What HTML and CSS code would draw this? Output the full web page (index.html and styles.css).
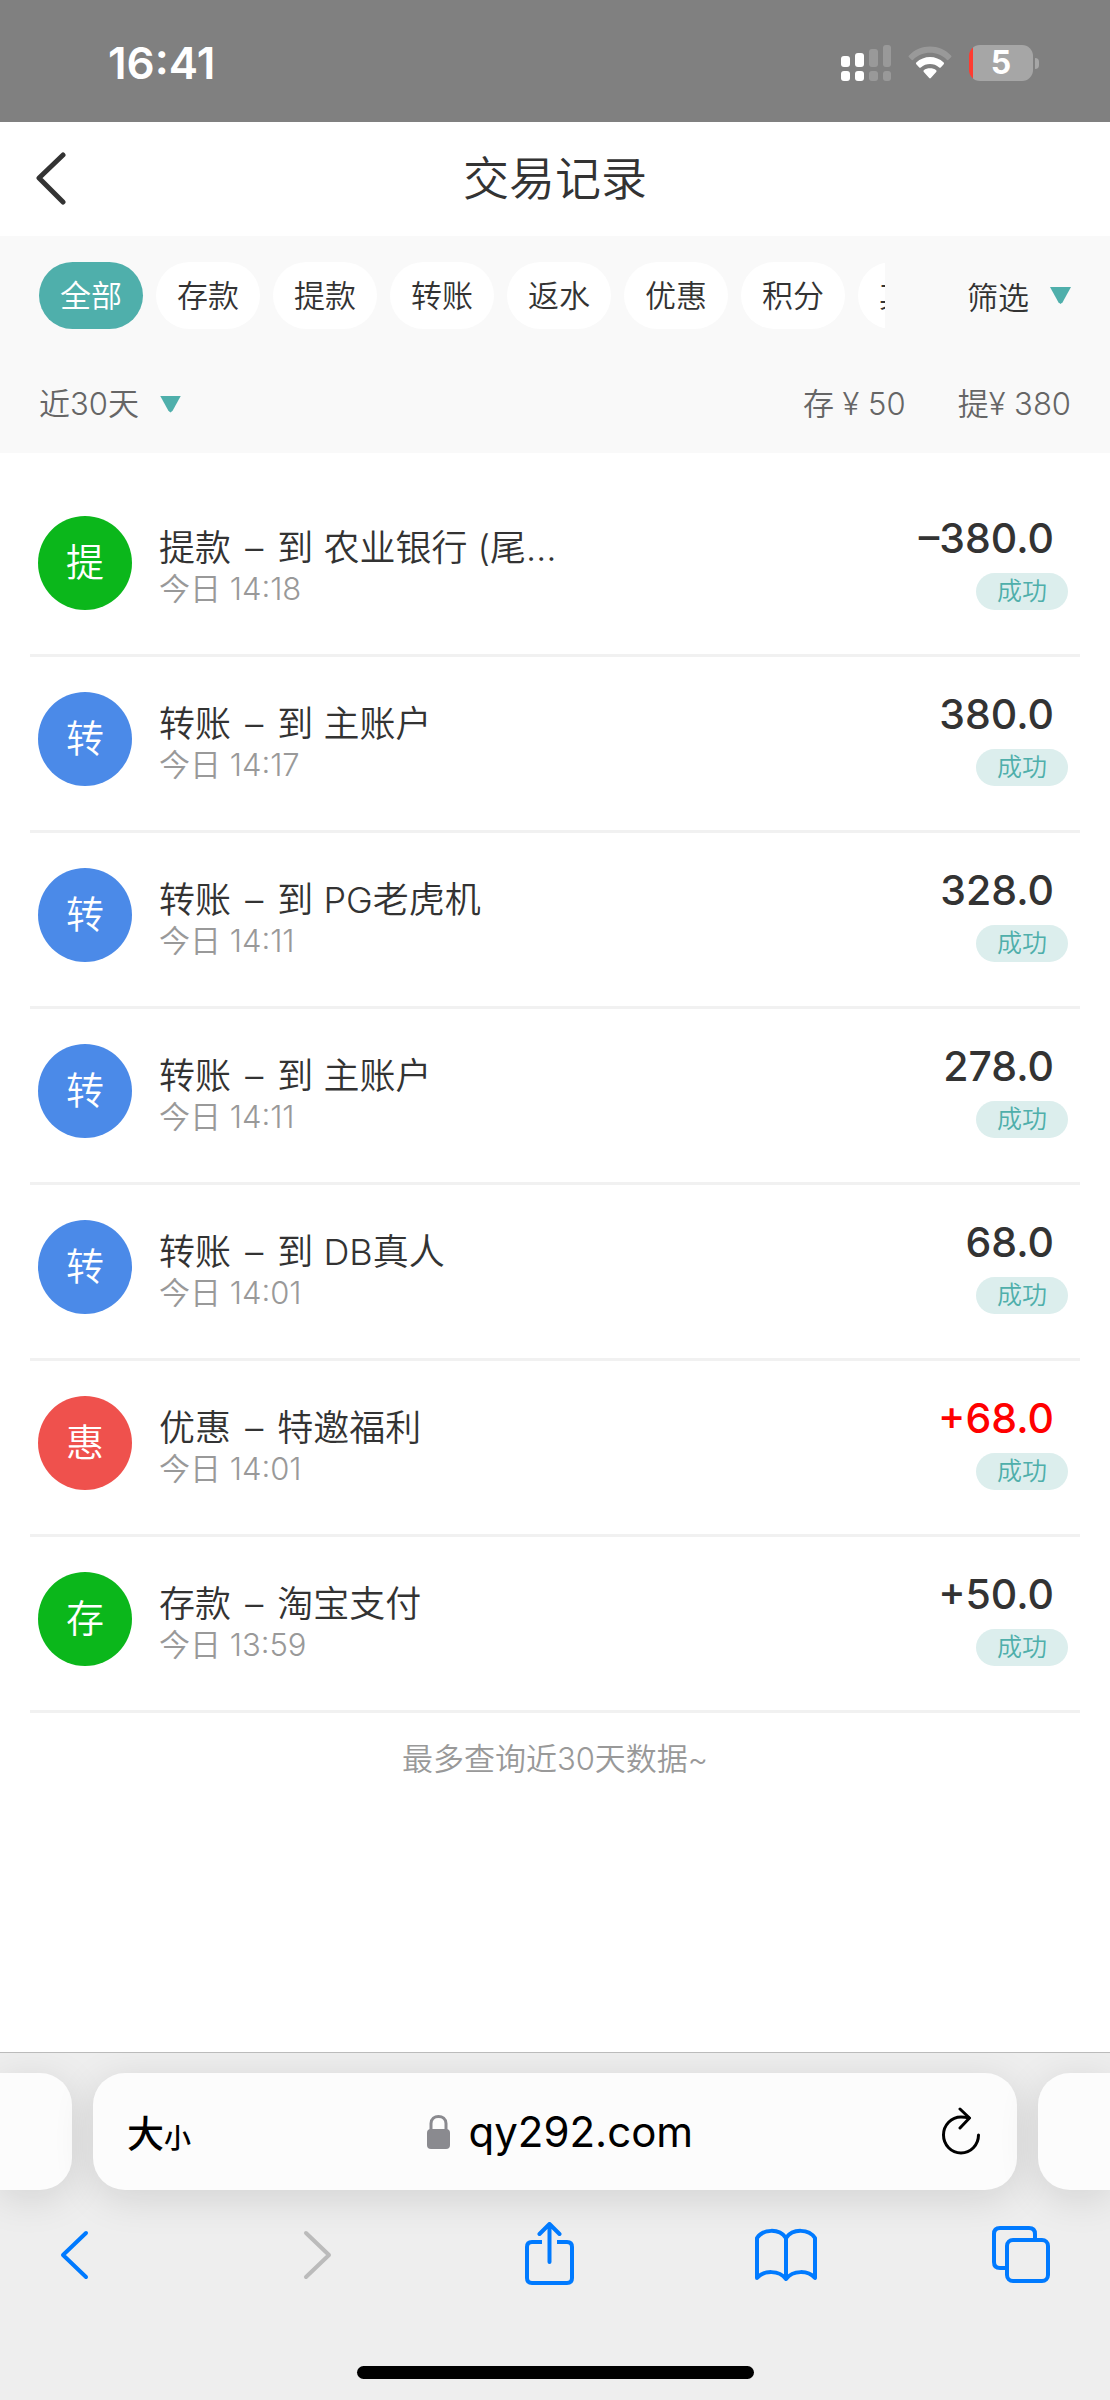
FILE: index.html
```html
<!DOCTYPE html>
<html lang="zh-CN">
<head>
    <meta charset="UTF-8">
    <meta name="viewport" content="width=device-width, initial-scale=1.0">
    <title>交易记录</title>
    <link rel="stylesheet" href="styles.css">
</head>
<body>
    <!-- Status bar -->
    <div class="status-bar">
        <span class="clock">16:41</span>
        <div class="status-icons">
            <svg class="signal" width="50" height="36" viewBox="0 0 50 36" fill="#fff" aria-hidden="true">
                <rect x="0" y="11" width="9" height="11" rx="3"/>
                <rect x="14" y="8" width="9" height="14" rx="3"/>
                <rect x="28" y="4" width="9" height="18" rx="3" opacity="0.2"/>
                <rect x="42" y="0" width="8" height="22" rx="3" opacity="0.2"/>
                <rect x="0" y="26" width="9" height="10" rx="3"/>
                <rect x="14" y="26" width="9" height="10" rx="3"/>
                <rect x="28" y="26" width="9" height="10" rx="3" opacity="0.2"/>
                <rect x="42" y="26" width="8" height="10" rx="3" opacity="0.2"/>
            </svg>
            <svg class="wifi" width="44" height="36" viewBox="0 0 44 36" fill="#fff" aria-hidden="true">
                <path opacity="0.2" d="M1 10.500C12 -1.500 32 -1.500 43 10.500Q44 11.300 43 12.200L40.200 15Q39.500 15.500 38.800 14.800C30 5.500 14 5.500 5.200 14.800Q4.500 15.500 3.800 15L1 12.200Q0 11.300 1 10.500Z"/>
                <path d="M8.300 17.600C16 10.200 28 10.200 35.700 17.600Q36.500 18.400 35.700 19.200L32.700 22.400Q32 23 31.200 22.400C26 17.900 18 17.900 12.800 22.400Q12 23 11.300 22.400L8.300 19.200Q7.500 18.400 8.300 17.600Z"/>
                <path d="M15.800 25.300C19 22.700 25 22.700 28.200 25.300Q29 26.100 28.200 26.900L22.800 33Q22 33.800 21.200 33L15.800 26.900Q15 26.100 15.800 25.300Z"/>
            </svg>
            <div class="battery"><span class="battery-level">5</span></div>
        </div>
    </div>

    <!-- Page header -->
    <header class="header">
        <a class="back" href="#" aria-label="返回">
            <svg width="32" height="54" viewBox="0 0 32 54" fill="none" stroke="#333" stroke-width="5" stroke-linecap="round" stroke-linejoin="round">
                <path d="M28 4L4 27L28 51"/>
            </svg>
        </a>
        <h1 class="title">交易记录</h1>
    </header>

    <!-- Filters -->
    <section class="filters">
        <div class="filter-row">
            <div class="tabs">
                <button type="button" class="tab active">全部</button>
                <button type="button" class="tab">存款</button>
                <button type="button" class="tab">提款</button>
                <button type="button" class="tab">转账</button>
                <button type="button" class="tab">返水</button>
                <button type="button" class="tab">优惠</button>
                <button type="button" class="tab">积分</button>
                <button type="button" class="tab">其他</button>
            </div>
            <button type="button" class="filter-btn">筛选<span class="arrow"></span></button>
        </div>
        <div class="summary-row">
            <label class="range">
                <select class="range-select" aria-label="时间范围">
                    <option>近30天</option>
                </select>
                <span class="arrow"></span>
            </label>
            <div class="totals">
                <span>存 ¥ 50</span>
                <span>提¥ 380</span>
            </div>
        </div>
    </section>

    <!-- Transaction list -->
    <main class="content">
        <ul class="records">
            <li class="record">
                <span class="badge green">提</span>
                <div class="info">
                    <p class="name">提款 <span class="dash">–</span> 到 农业银行 (尾…</p>
                    <p class="time">今日 14:18</p>
                </div>
                <div class="result">
                    <p class="amount">–380.0</p>
                    <span class="state">成功</span>
                </div>
            </li>
            <li class="record">
                <span class="badge blue">转</span>
                <div class="info">
                    <p class="name">转账 <span class="dash">–</span> 到 主账户</p>
                    <p class="time">今日 14:17</p>
                </div>
                <div class="result">
                    <p class="amount">380.0</p>
                    <span class="state">成功</span>
                </div>
            </li>
            <li class="record">
                <span class="badge blue">转</span>
                <div class="info">
                    <p class="name">转账 <span class="dash">–</span> 到 PG老虎机</p>
                    <p class="time">今日 14:11</p>
                </div>
                <div class="result">
                    <p class="amount">328.0</p>
                    <span class="state">成功</span>
                </div>
            </li>
            <li class="record">
                <span class="badge blue">转</span>
                <div class="info">
                    <p class="name">转账 <span class="dash">–</span> 到 主账户</p>
                    <p class="time">今日 14:11</p>
                </div>
                <div class="result">
                    <p class="amount">278.0</p>
                    <span class="state">成功</span>
                </div>
            </li>
            <li class="record">
                <span class="badge blue">转</span>
                <div class="info">
                    <p class="name">转账 <span class="dash">–</span> 到 DB真人</p>
                    <p class="time">今日 14:01</p>
                </div>
                <div class="result">
                    <p class="amount">68.0</p>
                    <span class="state">成功</span>
                </div>
            </li>
            <li class="record">
                <span class="badge red">惠</span>
                <div class="info">
                    <p class="name">优惠 <span class="dash">–</span> 特邀福利</p>
                    <p class="time">今日 14:01</p>
                </div>
                <div class="result">
                    <p class="amount bonus">+68.0</p>
                    <span class="state">成功</span>
                </div>
            </li>
            <li class="record">
                <span class="badge green">存</span>
                <div class="info">
                    <p class="name">存款 <span class="dash">–</span> 淘宝支付</p>
                    <p class="time">今日 13:59</p>
                </div>
                <div class="result">
                    <p class="amount">+50.0</p>
                    <span class="state">成功</span>
                </div>
            </li>
        </ul>
        <p class="note">最多查询近30天数据~</p>
    </main>

    <!-- Browser bar -->
    <footer class="browser">
        <div class="address-row">
            <div class="card card-left"></div>
            <div class="card address">
                <button type="button" class="text-size" aria-label="大小"><span class="big">大</span><span class="small">小</span></button>
                <div class="site">
                    <svg width="25" height="36" viewBox="0 0 25 36" aria-hidden="true">
                        <path d="M5 17V9.500C5 0 20 0 20 9.500V17" fill="none" stroke="#8a8a8f" stroke-width="3"/>
                        <rect x="1" y="15" width="23" height="20" rx="4" fill="#8a8a8f"/>
                    </svg>
                    <input class="url" type="text" value="qy292.com" aria-label="网址">
                </div>
                <button type="button" class="reload" aria-label="刷新">
                    <svg width="40" height="50" viewBox="0 0 40 50" fill="none" stroke="#000" stroke-width="3" stroke-linecap="round" stroke-linejoin="round">
                        <path d="M37.500 28A17.500 18 0 1 1 20 10C23 10 25.500 10.300 28 11"/>
                        <path d="M19 2L28.500 11L19 21"/>
                    </svg>
                </button>
            </div>
            <div class="card card-right"></div>
        </div>
        <nav class="toolbar">
            <button type="button" aria-label="后退">
                <svg width="64" height="66" viewBox="0 0 64 66" stroke-linejoin="round">
                    <path d="M43 11L20 33L43 55"/>
                </svg>
            </button>
            <button type="button" class="disabled" aria-label="前进" disabled>
                <svg width="64" height="66" viewBox="0 0 64 66" stroke-linejoin="round">
                    <path d="M26 11L49 33L26 55"/>
                </svg>
            </button>
            <button type="button" aria-label="分享">
                <svg width="64" height="66" viewBox="0 0 64 66">
                    <path stroke-linecap="butt" d="M25 20H15Q10 20 10 25V56Q10 61 15 61H50Q55 61 55 56V25Q55 20 50 20H40"/>
                    <path stroke-linejoin="round" d="M32.500 40V3M22.500 12L32.500 2L42.500 12"/>
                </svg>
            </button>
            <button type="button" aria-label="书签">
                <svg width="64" height="66" viewBox="0 0 64 66" stroke-linejoin="round">
                    <path d="M33 16C26 6 10 7 4 16V56C11 48 26 48 33 57C40 48 55 48 62 56V16C56 7 40 6 33 16ZM33 16V57"/>
                </svg>
            </button>
            <button type="button" aria-label="标签页">
                <svg width="64" height="66" viewBox="0 0 64 66">
                    <rect x="17" y="18" width="41" height="41" rx="6"/>
                    <path stroke-linecap="butt" d="M45 18V12Q45 6 39 6H10Q4 6 4 12V40Q4 46 10 46H17"/>
                </svg>
            </button>
        </nav>
        <div class="home-indicator"></div>
    </footer>
</body>
</html>
```
FILE: styles.css
```css
* {
    box-sizing: border-box;
    margin: 0;
    padding: 0;
}

body {
    display: flex;
    flex-direction: column;
    min-height: 100vh;
    background-color: #fff;
    color: #333;
    font-family: Inter, "Noto Sans CJK SC", sans-serif;
    font-size: 31px;
    font-weight: 350;
    overflow-x: hidden;
}

button,
select,
input {
    border: none;
    background: none;
    color: inherit;
    font: inherit;
    outline: none;
}

svg {
    display: block;
}

/* Status bar */
.status-bar {
    display: flex;
    align-items: center;
    justify-content: space-between;
    height: 122px;
    padding: 3px 77px 0 108px;
    background-color: #808080;
    color: #fff;
}

.clock {
    font-size: 44px;
    font-weight: 600;
}

.status-icons {
    display: flex;
    align-items: center;
    gap: 17px;
}

.battery {
    position: relative;
    width: 64px;
    height: 36px;
    border-radius: 11px;
    background: linear-gradient(to right, #ff3b30 4px, #a6a6a6 4px);
    text-align: center;
}

.battery::after {
    content: "";
    position: absolute;
    right: -6px;
    top: 13px;
    width: 4px;
    height: 11px;
    border-radius: 0 4px 4px 0;
    background-color: #a6a6a6;
}

.battery-level {
    display: block;
    font-size: 32px;
    font-weight: 700;
    line-height: 36px;
}

/* Page header */
.header {
    display: grid;
    grid-template-columns: 72px 1fr 72px;
    align-items: center;
    height: 114px;
    padding-bottom: 2px;
}

.back {
    padding-left: 35px;
}

.title {
    font-size: 46px;
    font-weight: 350;
    line-height: 60px;
    text-align: center;
}

/* Filters */
.filters {
    height: 217px;
    padding: 26px 39px 0;
    background-color: #f9f9f9;
}

.filter-row,
.summary-row {
    display: flex;
    align-items: center;
    justify-content: space-between;
}

.tabs {
    display: flex;
    gap: 13px;
    width: 82%;
    overflow: hidden;
}

.tab {
    flex: none;
    height: 67px;
    padding: 0 21px;
    border-radius: 34px;
    background-color: #fff;
    line-height: 66px;
}

.tab.active {
    background-color: #4fafab;
    color: #fff;
}

.filter-btn,
.range {
    display: flex;
    align-items: center;
    gap: 21px;
}

.arrow {
    width: 21px;
    height: 17px;
    background-color: #4fafab;
    clip-path: polygon(0 0, 100% 0, 60% 90%, 50% 100%, 40% 90%);
}

.summary-row {
    margin-top: 53px;
    color: #666;
    line-height: 44px;
}

.range-select {
    appearance: none;
}

.totals {
    display: flex;
    gap: 52px;
}

/* Transaction list */
.content {
    flex: 1;
    padding: 28px 30px 0;
}

.records {
    list-style: none;
}

.record {
    display: flex;
    align-items: flex-start;
    height: 176px;
    padding: 35px 12px 0 8px;
    border-bottom: 3px solid #f1f1f1;
}

.badge {
    width: 94px;
    height: 94px;
    border-radius: 50%;
    color: #fff;
    font-size: 38px;
    line-height: 92px;
    text-align: center;
}

.green {
    background-color: #0bb71b;
}

.blue {
    background-color: #4b8ae8;
}

.red {
    background-color: #ef514d;
}

.info {
    flex: 1;
    padding: 11px 0 0 27px;
}

.name {
    font-size: 36px;
    line-height: 42px;
}

.dash {
    margin: 0 4px;
}

.time {
    color: #999;
    line-height: 40px;
}

.result {
    display: flex;
    flex-direction: column;
    align-items: flex-end;
}

.amount {
    padding-right: 14px;
    font-size: 41px;
    font-weight: 500;
    line-height: 44px;
}

.bonus {
    color: #f00;
}

.state {
    margin-top: 13px;
    padding: 0 21px;
    border-radius: 19px;
    background-color: #dceeed;
    color: #4fafab;
    font-size: 25px;
    line-height: 37px;
}

.note {
    padding-top: 24px;
    color: #999;
    line-height: 44px;
    text-align: center;
}

/* Browser bar */
.browser {
    display: flex;
    flex-direction: column;
    height: 348px;
    padding: 20px 0 21px;
    border-top: 1px solid #bbb;
    background-color: #eee;
    color: #000;
    overflow: hidden;
}

.address-row {
    display: grid;
    grid-template-columns: 72px 1fr 72px;
    gap: 21px;
    height: 117px;
}

.card {
    border-radius: 32px;
    background-color: #fcfcfc;
    box-shadow: 0 8px 40px rgba(0, 0, 0, 0.12);
}

.card-left {
    border-radius: 0 32px 32px 0;
}

.card-right {
    border-radius: 32px 0 0 32px;
}

.address {
    display: grid;
    grid-template-columns: 1fr auto 1fr;
    align-items: center;
    padding: 0 36px 0 34px;
}

.text-size {
    justify-self: start;
    font-weight: 500;
}

.big {
    font-size: 37px;
}

.small {
    font-size: 27px;
}

.site {
    display: flex;
    align-items: center;
    gap: 18px;
    padding-left: 12px;
}

.url {
    width: 226px;
    font-size: 42px;
    font-weight: 400;
}

.reload {
    justify-self: end;
}

.toolbar {
    display: flex;
    justify-content: space-between;
    padding: 32px 56px 0 43px;
}

.toolbar svg {
    fill: none;
    stroke: #007aff;
    stroke-width: 4;
    stroke-linecap: round;
}

.toolbar .disabled svg {
    stroke: #bbb;
}

.home-indicator {
    width: 397px;
    height: 13px;
    margin: auto auto 0;
    border-radius: 7px;
    background-color: #000;
}
```
